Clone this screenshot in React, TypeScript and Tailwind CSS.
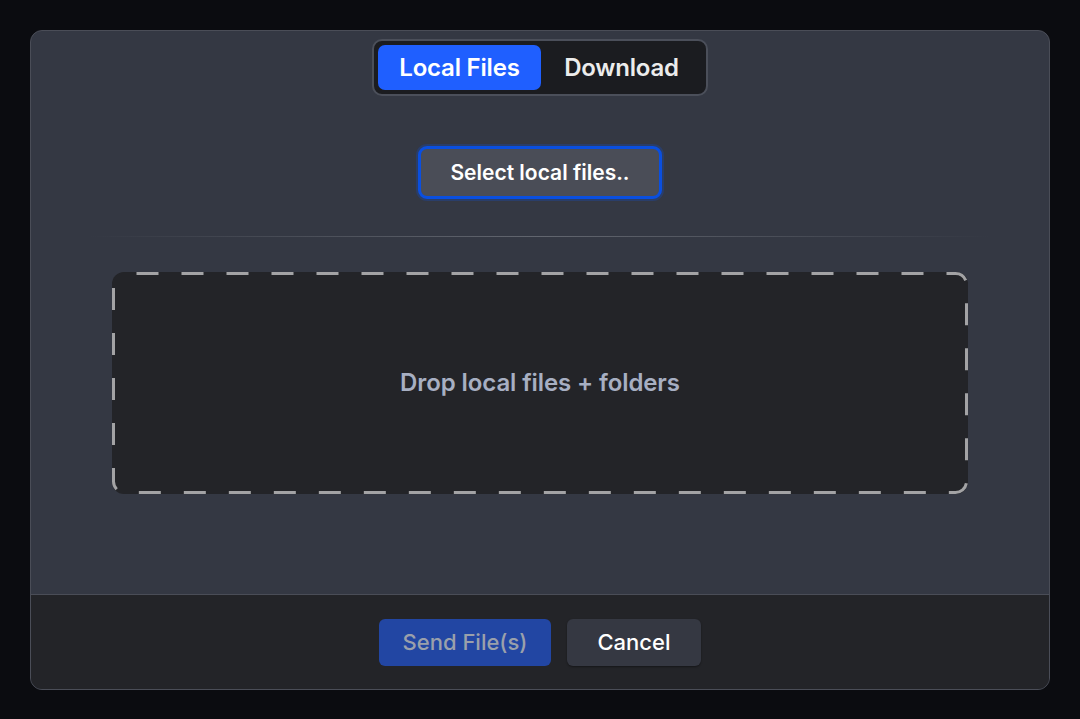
import React from "react"

const DashedFrame = () => (
  <svg className="pointer-events-none absolute inset-0 h-full w-full" preserveAspectRatio="none">
    <rect
      x="1.5"
      y="1.5"
      width="calc(100% - 3px)"
      height="calc(100% - 3px)"
      rx="11"
      ry="11"
      fill="none"
      stroke="#a3a3a5"
      strokeWidth="3"
      strokeDasharray="22 23"
      strokeDashoffset="-12"
    />
  </svg>
)

export default function App() {
  return (
    <div className="min-h-[719px] w-full bg-[#0b0c10] p-[30px] font-['Inter','Noto_Sans',sans-serif]">
      <div className="mx-auto flex h-[660px] w-[1020px] flex-col overflow-hidden rounded-[12px] border border-[#4a4d57] bg-[#343843]">
        <section className="flex flex-1 flex-col items-center pt-[8px]">
          {/* tabs */}
          <div className="flex h-[57px] w-[336px] items-center rounded-[10px] border-2 border-[#4b4f5a] bg-[#1b1c20] p-[4px]">
            <button className="h-[45px] w-[163px] rounded-[7px] bg-[#1f5fff] text-[24px] font-semibold tracking-[-0.2px] text-white">
              Local Files
            </button>
            <button className="h-[45px] flex-1 text-[24px] font-semibold tracking-[-0.2px] text-[#ececec]">
              Download
            </button>
          </div>

          <button className="mt-[50px] h-[53px] w-[244px] rounded-[9px] border-[3px] border-[#0a4fe0] bg-[#4a4d57] text-[21px] font-semibold text-white shadow-[0_0_0_2px_rgba(10,79,224,0.25)]">
            Select local files..
          </button>

          <div className="mt-[37px] h-px w-[900px] bg-gradient-to-r from-transparent via-[#62666f] to-transparent" />

          <div className="relative mt-[35px] flex h-[222px] w-[856px] items-center justify-center rounded-[12px] bg-[#232428]">
            <DashedFrame />
            <p className="text-[24px] font-semibold tracking-[-0.1px] text-[#a7afc2]">Drop local files + folders</p>
          </div>
        </section>

        <footer className="flex h-[95px] items-center justify-center gap-[16px] border-t border-[#4a4d57] bg-[#232428]">
          <button className="h-[47px] w-[172px] rounded-[6px] bg-[#2246a3] text-[22px] font-medium text-[#9aa0ab]">
            Send File(s)
          </button>
          <button className="h-[47px] w-[134px] rounded-[6px] bg-[#353842] text-[22px] font-medium text-white shadow-[0_1px_2px_rgba(0,0,0,0.4)]">
            Cancel
          </button>
        </footer>
      </div>
    </div>
  )
}
